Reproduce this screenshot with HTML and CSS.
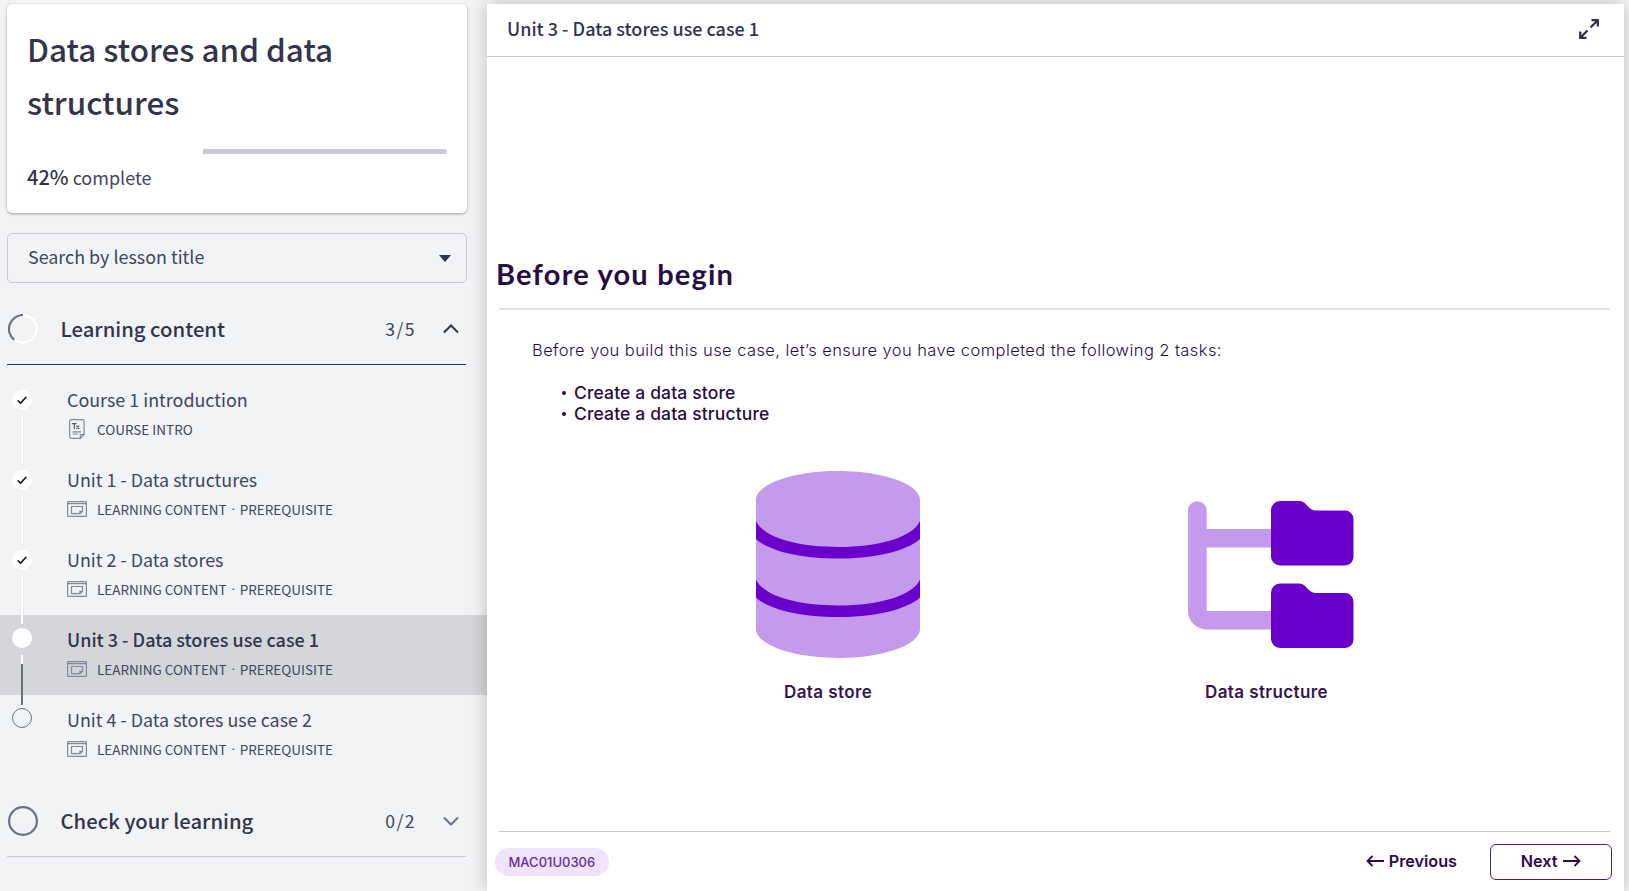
FILE: index.html
```
<!DOCTYPE html>
<html lang="en">
<head>
<meta charset="utf-8">
<title>Data stores and data structures</title>
<link rel="stylesheet" href="styles.css">
</head>
<body>
<svg width="0" height="0" class="defs" aria-hidden="true">
  <symbol id="slide" viewBox="0 0 20 16"><rect x=".6" y=".6" width="18.8" height="14.8" rx=".6"/><path d="M1 2.7h18M4.5 5.5h11v5l-2.6 2.2H4.5zM15.5 10.3h-2.6v2.4"/></symbol>
  <symbol id="check" viewBox="0 0 20 20"><path d="M5.6 10.4l2.9 2.7 5.9-6.2"/></symbol>
</svg>
<div class="app">
  <aside class="sidebar">
    <section class="course">
      <h1 class="course-title">Data stores and data structures</h1>
      <div class="progress"><div class="progress-rest" style="width:58%"></div></div>
      <p class="complete"><b>42%</b> complete</p>
    </section>
    <div class="search"><span>Search by lesson title</span><svg class="caret" width="12" height="7"><path d="M0 0h12L6.6 6.6a.9.9 0 0 1-1.2 0z"/></svg></div>

    <div class="section open">
      <svg class="ring" width="30" height="30" viewBox="0 0 30 30"><circle cx="15" cy="15" r="14.3" class="ring-edge"/><circle cx="15" cy="15" r="13.7" class="ring-base"/><path d="M15 1A14 14 0 0 0 6.2 25.9"/></svg>
      <h2 class="section-title">Learning content</h2><span class="count">3/5</span>
      <svg class="chev" width="16" height="10" viewBox="0 0 16 10"><path d="M1 8.500L8 1.500l7 7"/></svg>
    </div>
    <ul class="lessons">
      <li class="lesson"><div class="rail"><svg class="dot"><use href="#check"/></svg><i class="line"></i></div>
        <div><div class="name">Course 1 introduction</div><div class="meta"><svg class="kind doc" width="20" height="20" viewBox="0 0 20 20"><path d="M4.300.6h11.200a1.600 1.600 0 0 1 1.600 1.600v13.300l-3.800 3.800h-9a1.600 1.600 0 0 1-1.600-1.600V2.200A1.600 1.600 0 0 1 4.300.6zM17.100 15.500h-3.800v3.800M5.500 12.800h8.500M5.500 15h5.500"/><path class="bold" d="M5 4.700h4.600M7.300 4.700v5.300M9.400 6.500l2.800 3.500M12.200 6.500L9.400 10"/></svg><span>COURSE INTRO</span></div></div></li>
      <li class="lesson"><div class="rail"><svg class="dot"><use href="#check"/></svg><i class="line"></i></div>
        <div><div class="name">Unit 1 - Data structures</div><div class="meta"><svg class="kind"><use href="#slide"/></svg><span>LEARNING CONTENT</span><span class="sep">·</span><span>PREREQUISITE</span></div></div></li>
      <li class="lesson"><div class="rail"><svg class="dot"><use href="#check"/></svg><i class="line"></i></div>
        <div><div class="name">Unit 2 - Data stores</div><div class="meta"><svg class="kind"><use href="#slide"/></svg><span>LEARNING CONTENT</span><span class="sep">·</span><span>PREREQUISITE</span></div></div></li>
      <li class="lesson active"><div class="rail"><i class="dot"></i><i class="line half"></i></div>
        <div><div class="name">Unit 3 - Data stores use case 1</div><div class="meta"><svg class="kind"><use href="#slide"/></svg><span>LEARNING CONTENT</span><span class="sep">·</span><span>PREREQUISITE</span></div></div></li>
      <li class="lesson todo"><div class="rail"><i class="dot empty"></i></div>
        <div><div class="name">Unit 4 - Data stores use case 2</div><div class="meta"><svg class="kind"><use href="#slide"/></svg><span>LEARNING CONTENT</span><span class="sep">·</span><span>PREREQUISITE</span></div></div></li>
    </ul>
    <div class="section">
      <svg class="ring" width="30" height="30" viewBox="0 0 30 30"><circle cx="15" cy="15" r="13.900"/></svg>
      <h2 class="section-title">Check your learning</h2><span class="count">0/2</span>
      <svg class="chev" width="16" height="10" viewBox="0 0 16 10"><path d="M1 1.500l7 7 7-7"/></svg>
    </div>
  </aside>

  <main class="panel">
    <header class="panel-head"><span>Unit 3 - Data stores use case 1</span>
      <svg class="expand" width="20" height="20" viewBox="0 0 20 20"><path d="M12.500 1.200h6.300v6.300M18.500 1.500l-7 7M7.500 18.800H1.200v-6.300M1.500 18.500l7-7"/></svg>
    </header>
    <article class="slide">
      <h2 class="slide-title"><span>Before you begin</span></h2>
      <p class="intro">Before you build this use case, let’s ensure you have completed the following 2 tasks:</p>
      <ul class="tasks"><li>Create a data store</li><li>Create a data structure</li></ul>
      <div class="figures">
        <figure class="figure store">
          <svg width="164" height="187" viewBox="0 0 164 187">
            <path class="lilac" d="M0 29C0 13 37 0 82 0s82 13 82 29v129c0 16-37 29-82 29S0 174 0 158z"/>
            <path class="violet" d="M0 50C7 66 40 76 82 76s75-10 82-26v18C151 80 119 87.500 82 87.500S13 80 0 68zM0 108.500c7 16 40 26 82 26s75-10 82-26v18c-13 12-45 19.500-82 19.500S13 138.500 0 126.500z"/>
          </svg>
          <figcaption>Data store</figcaption>
        </figure>
        <figure class="figure structure">
          <svg width="166" height="148" viewBox="0 0 166 148">
            <path class="lilac" d="M0 9.500a9.300 9.300 0 0 1 18.700 0V28H86v18.500H18.700V110H86v18.500H18.500A18.500 18.500 0 0 1 0 110z"/>
            <path id="folder" class="violet" d="M92 0h19.500c7 0 8.500 9.500 16 9.500H157a8.500 8.500 0 0 1 8.500 8.500v38a8.500 8.500 0 0 1-8.500 8.500H92a9 9 0 0 1-9-9V9a9 9 0 0 1 9-9z"/>
            <use href="#folder" y="82.500"/>
          </svg>
          <figcaption>Data structure</figcaption>
        </figure>
      </div>
    </article>
    <footer class="panel-foot">
      <span class="pill">MAC01U0306</span>
      <span class="nav prev"><svg width="19" height="12" viewBox="0 0 19 12"><path d="M18 6H1.500M6.500 1l-5 5 5 5"/></svg>Previous</span>
      <span class="nav next">Next<svg width="19" height="12" viewBox="0 0 19 12"><path d="M1 6h16.500M12.500 1l5 5-5 5"/></svg></span>
    </footer>
  </main>
</div>
</body>
</html>
```
FILE: styles.css
```
* { box-sizing: border-box; }
body { margin: 0; background: #f1f3f5; color: #33344a; font-family: "Noto Sans CJK SC", sans-serif; overflow: hidden; }
h1, h2, p, ul, figure { margin: 0; padding: 0; }
ul { list-style: none; }
svg { fill: none; display: block; flex: none; }
.defs { position: absolute; }
.app { display: flex; height: 891px; }

.sidebar { width: 487px; flex: none; padding-top: 4px; }
.course { margin: 0 20px 0 7px; height: 209px; padding: 17.700px 20px 0; background: #fff; border-radius: 5px; box-shadow: 0 1px 3px rgba(0,0,0,.35); }
.course-title { font-size: 31.450px; font-weight: 500; line-height: 53.300px; padding-right: 60px; }
.progress { display: flex; justify-content: flex-end; margin-top: 20.700px; }
.progress-rest { height: 5px; background: #c9cad5; border-radius: 0 3px 3px 0; }
.complete { margin-top: 8.300px; font-size: 18px; line-height: 30px; color: #43455a; }
.complete b { font-size: 20px; font-weight: 500; color: #33344a; }
.search { display: flex; align-items: center; justify-content: space-between; margin: 20px 20px 0 7px; height: 50px; padding: 0 15px 0 20px; border: 1px solid #c9cad5; border-radius: 5px; font-size: 17.900px; line-height: 26px; color: #43455a; }
.search span { padding-bottom: 5px; }
.caret { fill: #33344a; }

.section { display: flex; align-items: center; height: 66px; margin: 16px 21px 0 7px; padding: 0 7px 5px 1px; border-bottom: 1px solid #c9cad5; }
.section.open { border-color: #33344a; }
.ring { stroke: #6d7085; stroke-width: 2.200; }
.ring-edge { stroke: #b5b7c2; stroke-width: 1; stroke-dasharray: 2 2; }
.ring-base { stroke: #fff; stroke-width: 2.500; }
.section-title { flex: 1; margin-left: 22.500px; padding-bottom: 2px; font-size: 20.300px; font-weight: 500; line-height: 28px; }
.count { font-size: 17.600px; letter-spacing: 1.400px; line-height: 26px; padding-bottom: 1px; margin-right: 27px; color: #43455a; }
.chev { stroke: #6d7085; stroke-width: 2; }
.open .chev { stroke: #33344a; }

.lessons { padding-top: 10px; }
.lesson { display: flex; height: 80px; padding: 10px 0 0 12px; }
.active { background: #d5d6da; }
.rail { position: relative; z-index: 1; width: 20px; margin-right: 35px; padding-top: 5px; display: flex; flex-direction: column; align-items: center; }
.active .rail, .todo .rail { padding-top: 3px; }
.dot { width: 20px; height: 20px; flex: none; border-radius: 50%; background: #fff; stroke: #222; stroke-width: 1.600; }
.empty { background: none; border: 1px solid #6d7085; }
.line { flex: none; width: 2px; height: 49px; margin-top: 5px; background: #fff; box-shadow: 0 0 1px rgba(60,60,90,.25); }
.half { height: 50px; margin-top: 7px; box-shadow: none; background: linear-gradient(#fff 9px, #6d7085 9px); }
.name { font-size: 17.900px; line-height: 28px; color: #43455a; }
.active .name { font-size: 18px; font-weight: 500; color: #33344a; }
.meta { display: flex; align-items: center; height: 20px; margin-top: 6px; font-size: 13.500px; line-height: 20px; color: #43455a; }
.kind { width: 20px; height: 16px; margin-right: 10px; stroke: #85879a; stroke-width: 1.200; }
.kind.doc { height: 20px; }
.bold { stroke: #55576c; }
.sep { width: 13px; text-align: center; font-family: "Open Sans", sans-serif; }

.panel { position: relative; width: 1137px; margin-top: 4px; background: #fff; box-shadow: 0 0 17px rgba(0,0,0,.22); display: flex; flex-direction: column; }
.panel-head { display: flex; align-items: center; justify-content: space-between; height: 53px; padding: 0 25px 3px 20px; border-bottom: 1px solid #c9cad5; font-size: 18px; font-weight: 500; line-height: 26px; }
.panel-head span { padding-bottom: 2px; }
.expand { stroke: #33344a; stroke-width: 2.300; }
.slide { flex: 1; margin: 0 14px 0 12px; padding-top: 199px; font-family: Inter, sans-serif; color: #270d45; border-bottom: 1px solid #cdc7cb; }
.slide-title { height: 54px; border-bottom: 2px solid #e4dfe2; font: 700 29px/36px Lato, sans-serif; letter-spacing: 1.200px; }
.slide-title span { margin-left: -3px; }
.intro { margin: 28px 0 0 33px; font-size: 16.500px; font-weight: 300; line-height: 24px; letter-spacing: .420px; }
.tasks { margin: 20px 0 0 62.500px; font-size: 17.500px; font-weight: 500; line-height: 21px; letter-spacing: .130px; }
.tasks li { display: flex; align-items: center; gap: 8.500px; }
.tasks li::before { content: ""; width: 4px; height: 4px; border-radius: 50%; background: #270d45; }
.figures { display: flex; align-items: flex-end; margin: 47px 0 0 257px; }
.figure { display: flex; flex-direction: column; }
.structure { margin-left: 268px; }
.lilac { fill: #c49aec; }
.violet { fill: #6b00cc; }
figcaption { margin-top: 22px; font-size: 17px; font-weight: 600; line-height: 24px; letter-spacing: .400px; white-space: nowrap; color: #331650; }
.store figcaption { padding-left: 28px; }
.structure svg { margin-bottom: 9px; }
.structure figcaption { padding-left: 17px; }
.panel-foot { display: flex; align-items: center; height: 59px; padding: 0 12px 0 8px; font-family: Inter, sans-serif; color: #2d0a52; }
.pill { height: 28px; padding: 0 14px 0 13.500px; border-radius: 14px; background: #efe3fb; color: #662d96; font-size: 13px; font-weight: 500; line-height: 28px; margin-right: auto; }
.nav { display: flex; align-items: center; gap: 4px; font-size: 16.200px; font-weight: 600; line-height: 20px; }
.nav svg { stroke: #2d0a52; stroke-width: 1.800; }
.next { gap: 5px; justify-content: center; width: 122px; height: 36px; margin-left: 33px; padding-bottom: 1px; border: 1.500px solid #4b2172; border-radius: 6px; }
.prev { padding-bottom: 1px; }
```
